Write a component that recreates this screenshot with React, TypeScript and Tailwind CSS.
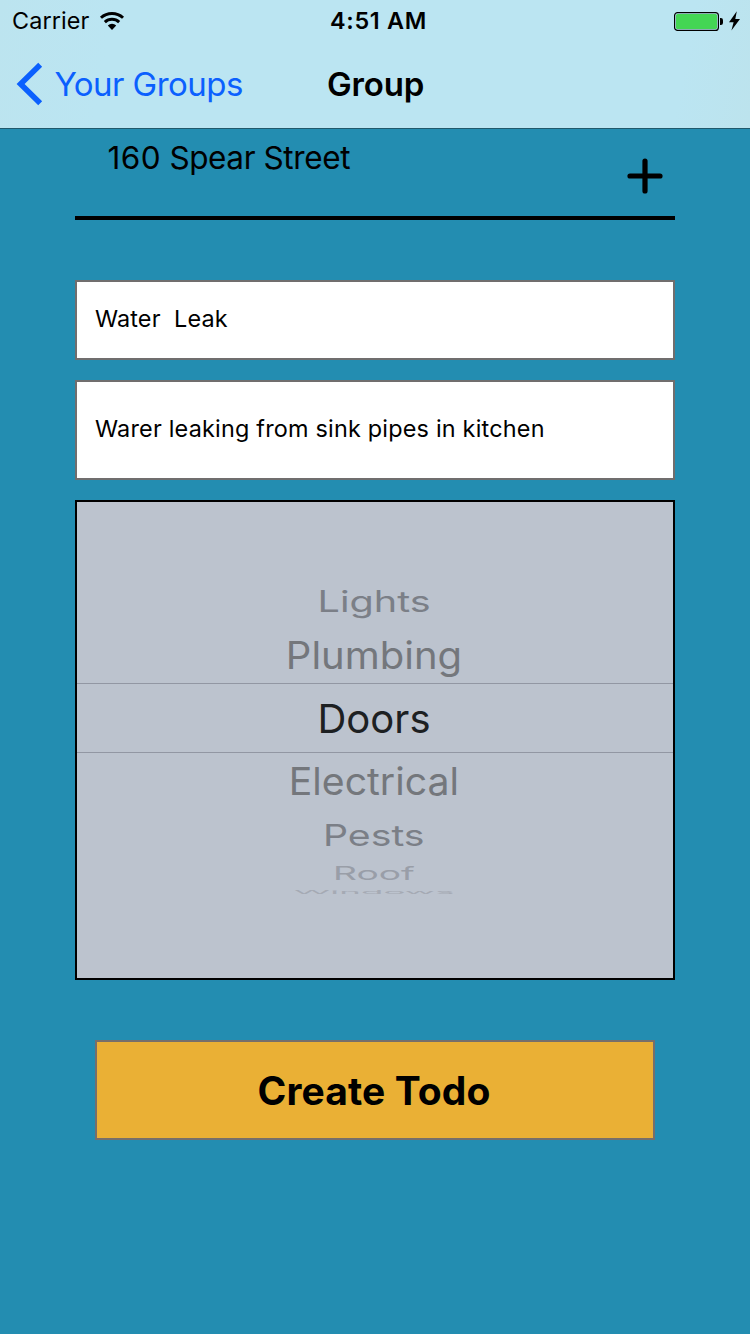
import type { ReactNode } from "react";

function WifiIcon() {
  return (
    <svg className="h-5 w-[26px]" viewBox="0 0 26 20" fill="none" stroke="#000">
      <path d="M1.96 6.74A16.5 16.5 0 0 1 24.04 6.74" strokeWidth="3" />
      <path d="M5.84 11.05A10.7 10.7 0 0 1 20.16 11.05" strokeWidth="3.1" />
      <path d="M13 19L8.8 14.4A6.3 6.3 0 0 1 17.2 14.4Z" fill="#000" stroke="none" />
    </svg>
  );
}

function BatteryIcon() {
  return (
    <svg className="h-5 w-[68px]" viewBox="0 0 68 20">
      <rect x="0.6" y="1.6" width="43.8" height="17.8" rx="3" fill="none" stroke="#000" strokeWidth="1.2" />
      <rect x="2" y="3" width="41" height="15" rx="1.6" fill="#44d654" />
      <path d="M46 7h.8A2.2 2.2 0 0 1 49 9.2v2.6A2.2 2.2 0 0 1 46.8 14H46Z" />
      <path d="M62.8 0.2L55 11.2H59.6L57.4 19.4L66 8H61.3Z" />
    </svg>
  );
}

function StatusBar() {
  return (
    <div className="grid h-[41px] grid-cols-3 items-center text-[23.4px] leading-none">
      <div className="flex items-center gap-[9.5px] pl-3">
        <span className="tracking-[0.1px]">Carrier</span>
        <WifiIcon />
      </div>
      <div className="pl-20 font-semibold tracking-[0.7px]">4:51 AM</div>
      <div className="flex justify-end pr-2">
        <BatteryIcon />
      </div>
    </div>
  );
}

function NavBar() {
  return (
    <div className="flex h-[86px] items-center text-[33px] leading-none">
      <button className="flex w-[327px] items-center text-[#0b60fe]">
        <svg className="ml-[14px] h-[46px] w-[30px]" viewBox="0 0 30 46" fill="none" stroke="currentColor" strokeWidth="5.6">
          <path d="M26.2 3.8L6.6 23L26.2 42.2" />
        </svg>
        <span className="ml-[10.5px] tracking-[-0.55px]">Your Groups</span>
      </button>
      <h1 className="font-semibold tracking-[-0.15px]">Group</h1>
    </div>
  );
}

function PickerRow({ children, className, scale }: { children: ReactNode; className: string; scale: string }) {
  return (
    <div className={`flex shrink-0 items-center justify-center pr-0.5 text-[40px] leading-none ${className}`}>
      <span className={scale}>{children}</span>
    </div>
  );
}

export default function App() {
  return (
    <div className="flex h-[1334px] w-[750px] flex-col overflow-hidden bg-[#238db1] font-[Inter,sans-serif] text-black">
      <header className="h-[129px] shrink-0 border-b border-[#20596c] bg-[#bbe5f2] bg-[linear-gradient(100deg,#bce4ef_0%,#bbe5f2_15%,#bbe5f2_90%,#bce3ed_100%)]">
        <StatusBar />
        <NavBar />
      </header>

      <main className="flex flex-col px-[75px]">
        <div className="flex h-[91px] justify-between border-b-4 border-black pr-3 pl-[32.5px]">
          <h2 className="pt-[13px] text-[31.5px] leading-8 tracking-[-0.4px]">
            <span className="tracking-[0.4px]">160</span> Spear Street
          </h2>
          <svg className="mt-[29px] size-9" viewBox="0 0 36 36" stroke="#000" strokeWidth="5.2" strokeLinecap="round">
            <path d="M3 18H33M18 3V33" />
          </svg>
        </div>

        <div className="mt-[60px] flex h-20 items-center border-2 border-[#706e6e] bg-white pb-0.5 pl-[18px] text-[23.4px] leading-none tracking-[0.15px] whitespace-pre">
          {"Water  Leak"}
        </div>
        <div className="mt-5 flex h-[100px] items-center border-2 border-[#706e6e] bg-white pb-0.5 pl-[18px] text-[23.4px] leading-none tracking-[0.21px]">
          Warer leaking from sink pipes in kitchen
        </div>

        <div className="mt-5 flex h-[480px] flex-col border-2 border-black bg-[#bcc3ce] pt-[73px]">
          <PickerRow className="h-[53px] text-[#7b7f87]" scale="scale-x-99 scale-y-73">Lights</PickerRow>
          <PickerRow className="h-[55px] pt-px text-[#74777c]" scale="scale-y-95">Plumbing</PickerRow>
          <PickerRow className="h-[70px] border-y border-[#9297a3] pt-0.5 text-[#1d2022]" scale="">Doors</PickerRow>
          <PickerRow className="h-[56px] pt-0.5 text-[#74777c]" scale="scale-x-98 scale-y-95">Electrical</PickerRow>
          <PickerRow className="h-[52px] pt-px text-[#7b7f87]" scale="scale-x-98 scale-y-74">Pests</PickerRow>
          <PickerRow className="h-[24.5px] pt-px text-[#999ea8]" scale="scale-x-93 scale-y-46">Roof</PickerRow>
          <PickerRow className="h-[12.5px] text-[#a5aab4]" scale="scale-x-92 scale-y-13">Windows</PickerRow>
        </div>

        <button className="mx-5 mt-[60px] flex h-[100px] items-center justify-center border-2 border-[#766f6b] bg-[#eab035] pr-0.5 text-[39px] leading-none font-bold tracking-[0.1px]">
          Create Todo
        </button>
      </main>
    </div>
  );
}
